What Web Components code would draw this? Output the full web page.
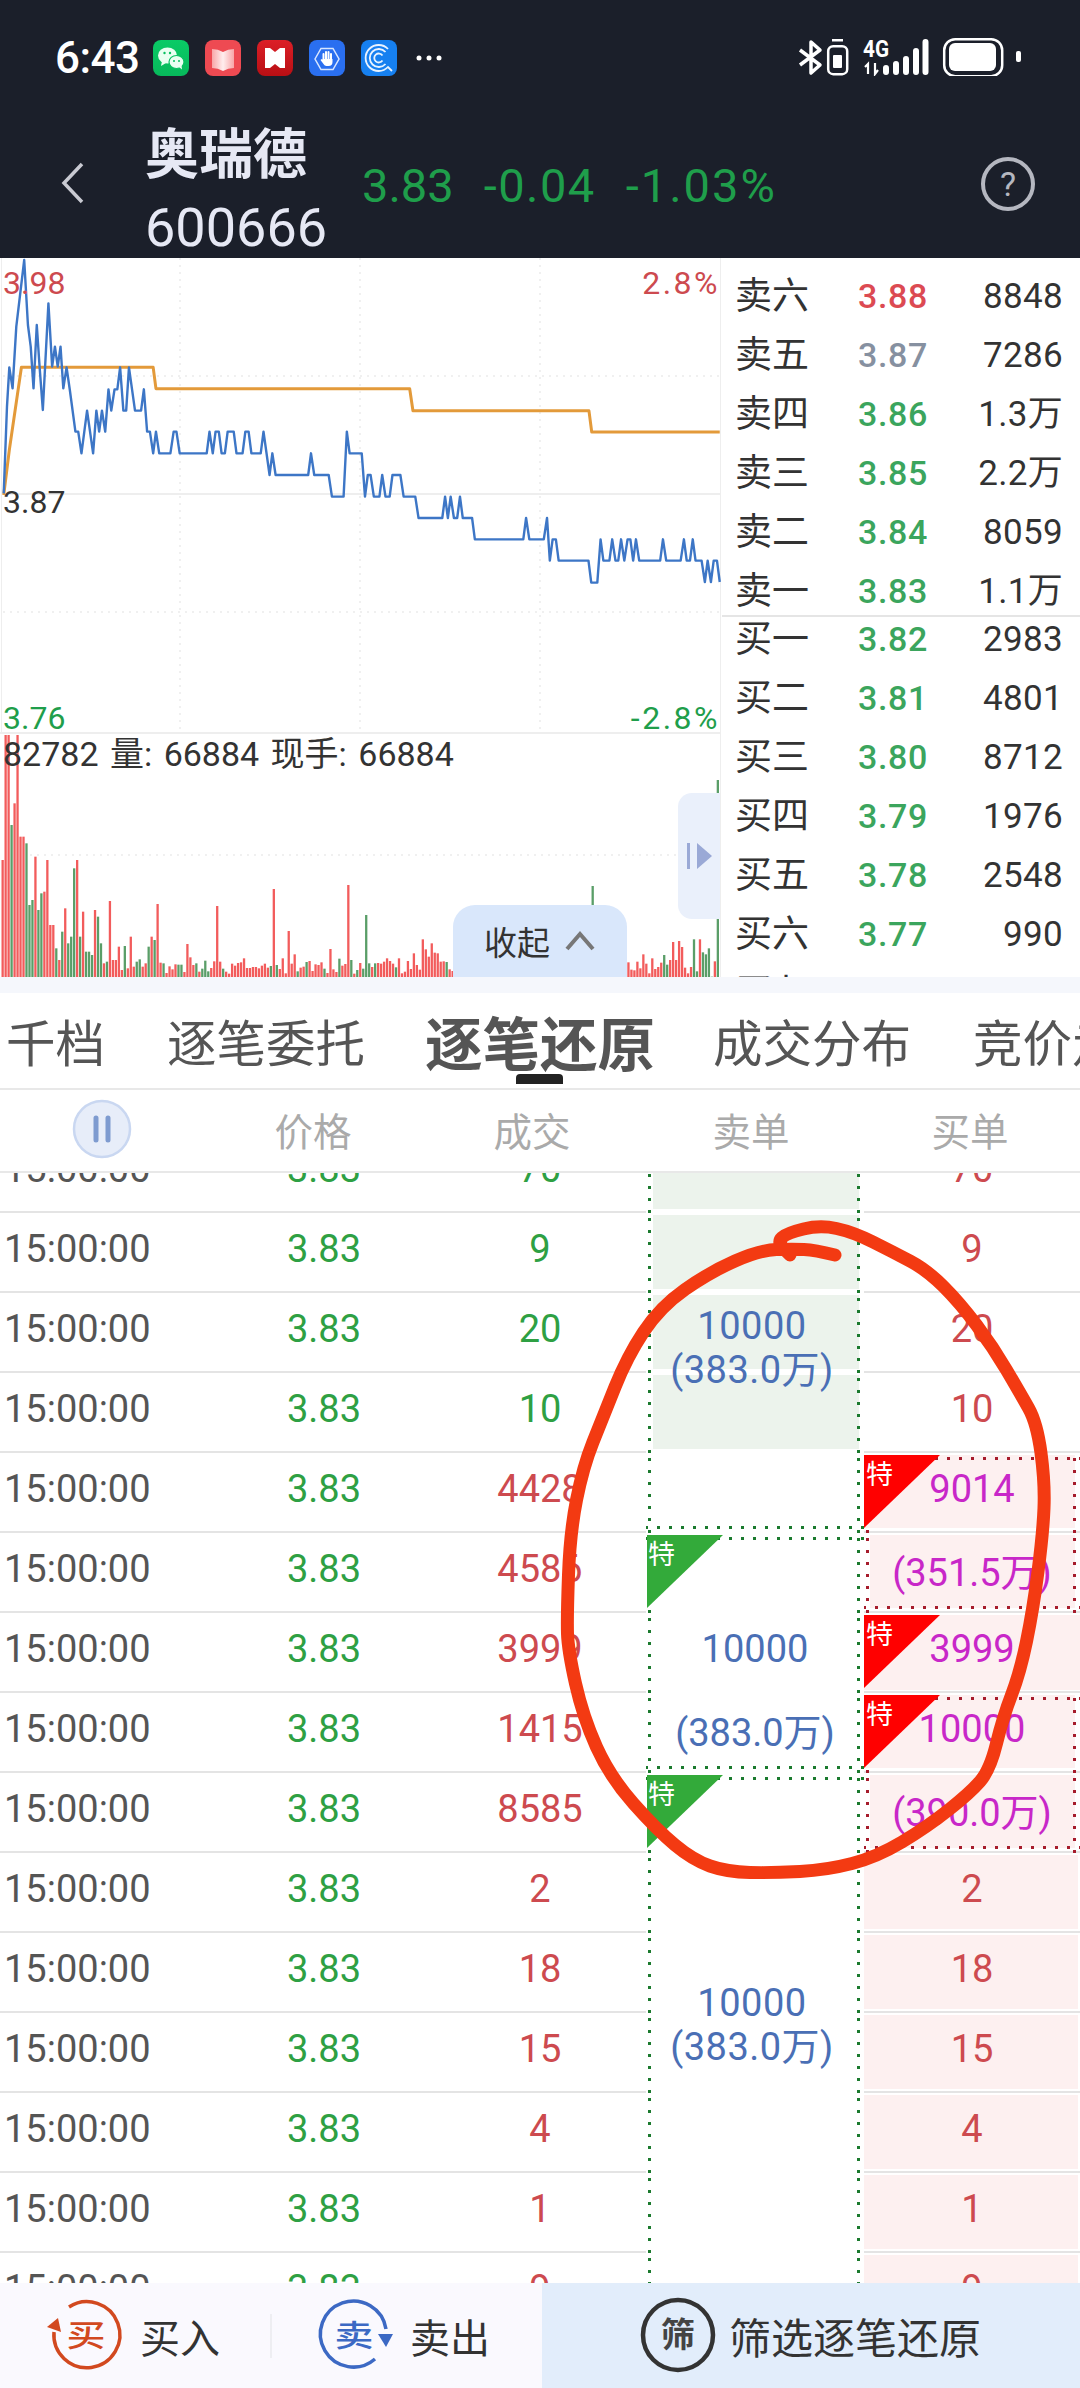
<!DOCTYPE html>
<html lang="zh">
<head>
<meta charset="utf-8">
<title>奥瑞德</title>
<style>
html,body{margin:0;padding:0;background:#fff;}
body{width:1080px;height:2388px;overflow:hidden;position:relative;display:flex;flex-direction:column;
	font-family:Roboto,"Noto Sans CJK SC",sans-serif;color:#333;}
</style>
</head>
<body>
<status-bar></status-bar>
<stock-header></stock-header>
<div style="display:flex;height:719px;flex:none">
	<minute-chart></minute-chart>
	<order-book></order-book>
</div>
<tab-bar></tab-bar>
<tick-head></tick-head>
<tick-table></tick-table>
<trade-bar></trade-bar>
<pen-mark></pen-mark>

<script>
'use strict';

const GREEN = '#2ea043';
const RED = '#cd4a4f';
const PURPLE = '#c827c8';

class StatusBar extends HTMLElement {
	constructor(){
		super();
		this.attachShadow({mode:'open'});
		this.shadowRoot.innerHTML = `
<style>
:host{display:flex;flex:none;height:76px;background:#1b1f2a;color:#fff;align-items:flex-start;padding:40px 0 0 55px;box-sizing:border-box;}
.time{font-size:44px;line-height:36px;font-weight:500;width:98px;flex:none;letter-spacing:-.5px;}
.apps{display:flex;gap:16px;flex:none;}
svg{display:block;flex:none;}
.more{margin:15px 0 0 19px;}
.sys{margin:-4px 55px 0 auto;}
</style>
<div class="time">6:43</div>
<div class="apps">
	<svg width="36" height="36" viewBox="0 0 36 36"><defs><linearGradient id="wx" x1="0" y1="0" x2="0" y2="1"><stop offset="0" stop-color="#0acb66"/><stop offset="1" stop-color="#07b95b"/></linearGradient></defs><rect width="36" height="36" rx="8" fill="url(#wx)"/><ellipse cx="14.500" cy="15.500" rx="9.500" ry="8" fill="#e9fff1"/><path d="M9 21l-1 5 5-3z" fill="#e9fff1"/><ellipse cx="23.500" cy="22" rx="7.500" ry="6.500" fill="#e9fff1" stroke="#08c060" stroke-width="1.200"/><path d="M26 27l3 2.500-.5-4z" fill="#e9fff1"/><circle cx="11.500" cy="13" r="1.200" fill="#08c060"/><circle cx="17" cy="13" r="1.200" fill="#08c060"/><circle cx="21" cy="21" r="1" fill="#08c060"/><circle cx="26" cy="21" r="1" fill="#08c060"/></svg>
	<svg width="36" height="36" viewBox="0 0 36 36"><defs><linearGradient id="bk" x1="0" y1="0" x2="1" y2="0"><stop offset="0" stop-color="#f8a6a8"/><stop offset=".5" stop-color="#ffeeee"/><stop offset="1" stop-color="#f8a6a8"/></linearGradient></defs><rect width="36" height="36" rx="8" fill="#ee4a52"/><path d="M7 9q6 0 11 3q5-3 11-3v19q-6 0-11 3q-5-3-11-3z" fill="url(#bk)"/></svg>
	<svg width="36" height="36" viewBox="0 0 36 36"><defs><linearGradient id="hd" x1="0" y1="0" x2="0" y2="1"><stop offset="0" stop-color="#dc1f27"/><stop offset="1" stop-color="#b80f14"/></linearGradient></defs><rect width="36" height="36" rx="8" fill="url(#hd)"/><path d="M8 8h5l5 4l5-4h5v20h-5l-5-4l-5 4h-5z" fill="#fff"/></svg>
	<svg width="36" height="36" viewBox="0 0 36 36"><rect width="36" height="36" rx="8" fill="#2a6ff0"/><path d="M6 19l6-10.500h12l6 10.500l-6 10.500h-12z" fill="none" stroke="#d8e6ff" stroke-width="1.500"/><path d="M14.500 20v-6m2.500 6v-8m2.500 8v-8m2.500 8v-6" stroke="#fff" stroke-width="2" stroke-linecap="round"/><path d="M13.500 19h10v3q0 4-4 4h-2q-2 0-3-2l-3-4l1-1l1 1z" fill="#fff"/></svg>
	<svg width="36" height="36" viewBox="0 0 36 36" fill="none" stroke="#e8f3ff"><rect width="36" height="36" rx="8" fill="#1680f0" stroke="none"/><path d="M27 9A13 13 0 1 0 27 27L31 31" stroke-width="1.800"/><path d="M24.500 12A9 9 0 1 0 24.500 24" stroke-width="1.800"/><path d="M21.500 15.500A4.500 4.500 0 1 0 21.500 20.500" stroke-width="1.800"/></svg>
</div>
<svg class="more" width="26" height="6" viewBox="0 0 26 6"><circle cx="3" cy="3" r="2.500" fill="#fff"/><circle cx="13" cy="3" r="2.500" fill="#fff"/><circle cx="23" cy="3" r="2.500" fill="#fff"/></svg>
<svg class="sys" width="230" height="44" viewBox="795 36 230 44" fill="none" stroke="#fff">
	<path d="M800 50l20 15l-9 8v-31l9 8l-20 15" stroke-width="3.500" stroke-linejoin="round"/>
	<rect x="832" y="39" width="11" height="2.500" fill="#fff" stroke="none"/>
	<rect x="828.200" y="46.200" width="19" height="28" rx="5" stroke-width="2.500"/>
	<rect x="833" y="55" width="9" height="13" rx="1" fill="#fff" stroke="none"/>
	<text x="863" y="57" font-family="Roboto" font-size="23" font-weight="700" fill="#fff" stroke="none" textLength="26" lengthAdjust="spacingAndGlyphs">4G</text>
	<path d="M868 74v-10l-3 3M875 63v11l3-4" stroke-width="2.200"/>
	<path d="M886 68v4M896 64v8M906 59v13M916 51v21M925.500 42v30" stroke-width="6" stroke-linecap="round"/>
	<rect x="944.200" y="39.200" width="58" height="37" rx="11" stroke-width="2.500"/>
	<rect x="949" y="43" width="47" height="28" rx="6" fill="#fff" stroke="none"/>
	<rect x="1016" y="51" width="5" height="11" rx="2" fill="#fff" stroke="none"/>
</svg>`;
	}
}
customElements.define('status-bar',StatusBar);

class StockHeader extends HTMLElement {
	constructor(){
		super();
		this.attachShadow({mode:'open'});
		this.shadowRoot.innerHTML = `
<style>
:host{display:flex;flex:none;height:182px;background:#1b1f2a;box-sizing:border-box;position:relative;overflow:hidden;}
.back{margin:86px 0 0 60px;flex:none;}
.name{margin-left:59px;padding-top:44px;width:216px;flex:none;color:#e6e8f4;}
.name div{line-height:72px;height:72px;white-space:nowrap;}
.cn{font-size:54px;font-weight:700;}
.code{font-size:54px;}
.quote{display:flex;gap:30px;margin:82px 0 0 1px;height:56px;line-height:56px;font-size:47px;color:#1f9e4b;white-space:nowrap;}
.quote span+span{letter-spacing:1.500px;}
.quote span:last-child{letter-spacing:2px;}
.help{margin:80px 44px 0 auto;flex:none;}
</style>
<svg class="back" width="26" height="42" viewBox="0 0 26 42"><path d="M22 2L4 21l18 19" fill="none" stroke="#c9cad2" stroke-width="3.500"/></svg>
<div class="name"><div class="cn">奥瑞德</div><div class="code">600666</div></div>
<div class="quote"><span>3.83</span><span>-0.04</span><span>-1.03%</span></div>
<svg class="help" width="56" height="56" viewBox="0 0 56 56"><circle cx="28" cy="28" r="25" fill="none" stroke="#b5b7c0" stroke-width="4"/><text x="28" y="40" text-anchor="middle" font-size="34" fill="#b5b7c0" font-family="Roboto">?</text></svg>`;
	}
}
customElements.define('stock-header',StockHeader);

class MinuteChart extends HTMLElement {
	constructor(){
		super();
		this.attachShadow({mode:'open'});
		this.shadowRoot.innerHTML = `
<style>
:host{display:block;position:relative;flex:none;width:722px;height:719px;overflow:hidden;background:#fff;border-right:0;}
svg{display:block;}
span{position:absolute;font-size:32px;line-height:36px;white-space:nowrap;}
.r{color:${RED}}.g{color:#1f9e4b}.k{color:#333}
.wide{letter-spacing:2.500px;}
.vol{left:3px;top:478px;font-size:34px;color:#333;word-spacing:3px;}
.fold{position:absolute;left:453px;top:647px;width:174px;height:72px;background:#d9e7fb;border-radius:22px 22px 0 0;display:flex;align-items:center;justify-content:center;gap:14px;font-size:33px;color:#333;}
.side{position:absolute;left:678px;top:535px;width:42px;height:126px;background:#eaf0fb;border-radius:14px 0 0 14px;display:flex;align-items:center;justify-content:center;}
</style>
<svg width="722" height="719" viewBox="0 258 722 719" id="plot"></svg>
<span class="r" style="left:3px;top:7px">3.98</span>
<span class="r wide" style="right:2px;top:7px">2.8%</span>
<span class="k" style="left:3px;top:226px">3.87</span>
<span class="g" style="left:3px;top:442px">3.76</span>
<span class="g wide" style="right:2px;top:442px">-2.8%</span>
<span class="vol">82782 量: 66884 现手: 66884</span>
<div class="side"><svg width="26" height="28" viewBox="0 0 26 28"><rect x="1" y="1" width="3" height="26" fill="#9aa9d6"/><path d="M11 1l15 13l-15 13z" fill="#9aa9d6"/></svg></div>
<div class="fold"><b style="font-weight:400">收起</b><svg width="32" height="22" viewBox="0 0 32 22"><path d="M3 19L16 4l13 15" fill="none" stroke="#777" stroke-width="4"/></svg></div>`;
		this.Draw();
	}

	get Line(){
		return '8,730 15,470 20,352 27,415 35,230 52,30 60,225 66,290 72,415 79,225 85,350 92,480 104,160 112,350 118,290 124,350 130,290 136,415 143,352 150,420 162,545 168,545 175,610 187,482 200,610 207,482 213,545 219,482 226,545 233,418 239,482 246,418 252,418 258,352 265,482 271,482 277,352 290,482 303,482 309,418 316,545 322,545 329,610 335,545 342,610 366,610 373,545 379,545 386,610 444,610 450,545 457,610 463,545 470,545 476,610 483,610 489,545 502,545 508,610 521,610 527,545 534,545 540,610 560,610 566,545 579,675 585,610 592,675 662,675 668,610 675,675 706,675 713,740 738,740 745,545 751,610 777,610 784,740 790,675 796,675 803,740 815,740 821,675 828,740 837,740 843,675 860,675 867,740 892,740 899,804 950,804 956,740 962,804 968,740 975,804 982,804 988,740 994,804 1014,804 1020,868 1124,868 1130,804 1137,868 1168,868 1175,804 1181,932 1187,868 1194,868 1200,932 1264,932 1270,998 1283,998 1290,868 1296,932 1309,932 1315,868 1322,932 1328,932 1334,868 1341,932 1348,868 1354,868 1360,932 1366,868 1373,932 1418,932 1424,868 1431,932 1462,932 1469,868 1475,932 1482,932 1488,868 1494,932 1507,932 1514,996 1520,932 1527,996 1533,932 1540,932 1546,996';
	}

	// tops are read off the crop of the reference: 3x vertical, from y=720
	get Bars(){
		let head = 'r420 r40 r40 g315 r250 r40 r350 r350 g370 g555 g540 r410 g570 g520 r515 r420 r615 r615 g685 r720 g635 r565 g670 g650 g445 r420 g650 r575 g695 g695 g705 r570 g590 g670 r730 g725 r543 r720 r720 r680 r750 g678 r745 r650 r740 g725 g718 r740 r730 g680 r650 g660 r552'.split(' ');
		let over = {62:'r672',63:'r712',72:'r558',81:'r715',91:'r507',92:'g735',94:'r715',96:'r633',98:'r703',110:'r687',113:'g716',116:'r495',117:'g720',122:'g585',129:'r715',133:'r715',138:'r700',141:'r658',142:'r688',143:'r710',144:'r670',145:'r698',146:'r700',147:'r725',198:'g498',210:'r727',215:'r703',218:'r715',222:'g705',224:'r720',225:'r666',226:'r720',227:'r663',228:'r681',232:'g658',234:'r658',235:'g697',236:'g703',237:'g685',238:'g770',240:'g180'};
		let seed = 17;
		let out = [];
		for(let i=0; i<241; i++){
			seed = (seed*137+59)%1009;
			let v = head[i] || over[i];
			if(!v){
				v = (seed%4==0 ? 'g' : 'r') + (722+seed%40);
			}
			out.push(v);
		}
		return out;
	}

	Draw(){
		let bars = this.Bars.map((b,i)=>{
			let top = Math.max(720+Number(b.slice(1))/3,735);
			let col = b[0]=='r' ? '#f25c5c' : '#5a9e68';
			return `<rect x="${1.5+i*2.98}" y="${top}" width="2.300" height="${977-top}" fill="${col}"/>`;
		}).join('');
		let dots = 'stroke="#ececec" stroke-width="1.500" stroke-dasharray="2 5"';
		this.shadowRoot.querySelector('#plot').innerHTML = `
<path d="M3 376H720M3 612H720M180 258V732M360 258V732M540 258V732" fill="none" ${dots}/>
<path d="M30 855H680" fill="none" ${dots}/>
<path d="M3 494H720M0 733H720" fill="none" stroke="#eeeeee" stroke-width="2"/>
<path d="M720.500 258V977M1.500 258V732" fill="none" stroke="#eeeeee" stroke-width="1"/>
<g transform="translate(0 250) scale(.46556 .33333)" fill="none" stroke-linejoin="round">
	<polyline points="8,735 20,600 46,352 329,352 335,416 880,416 887,482 1265,482 1271,546 1546,546" stroke="#e39a3a" stroke-width="3" vector-effect="non-scaling-stroke"/>
	<polyline points="${this.Line}" stroke="#3d76c6" stroke-width="2.400" vector-effect="non-scaling-stroke"/>
</g>
${bars}`;
	}
}
customElements.define('minute-chart',MinuteChart);

class OrderBook extends HTMLElement {
	constructor(){
		super();
		this.attachShadow({mode:'open'});
		let row = (a)=>`<div class="row"><span>${a[0]}</span><span style="color:${a[3]||'#3ba55d'}">${a[1]}</span><span class="v">${a[2]}</span></div>`;
		let sell = [['卖六','3.88','8848','#dc4a52'],['卖五','3.87','7286','#8690a0'],['卖四','3.86','1.3万'],['卖三','3.85','2.2万'],['卖二','3.84','8059'],['卖一','3.83','1.1万']];
		let buy = [['买一','3.82','2983'],['买二','3.81','4801'],['买三','3.80','8712'],['买四','3.79','1976'],['买五','3.78','2548'],['买六','3.77','990'],['买七','3.76','1204']];
		this.shadowRoot.innerHTML = `
<style>
:host{display:block;flex:none;width:358px;height:719px;overflow:hidden;background:#fff;}
.sell{height:359px;padding-top:9px;box-sizing:border-box;border-bottom:2px solid #e5e5e5;}
.buy{margin-top:-7px;}
.row{display:grid;grid-template-columns:123px 1fr auto;height:59px;line-height:59px;padding:0 17px 0 13px;font-size:35px;color:#333;letter-spacing:.3px;}
.row span:first-child{font-size:37px;letter-spacing:0;}
.row span:nth-child(2){font-weight:500;font-size:34px;letter-spacing:.6px;}
</style>
<div class="sell">${sell.map(row).join('')}</div>
<div class="buy">${buy.map(row).join('')}</div>`;
	}
}
customElements.define('order-book',OrderBook);

class TabBar extends HTMLElement {
	constructor(){
		super();
		this.attachShadow({mode:'open'});
		this.shadowRoot.innerHTML = `
<style>
:host{display:block;flex:none;box-sizing:border-box;height:113px;padding-top:16px;background:linear-gradient(#f5f7fc 16px,#fff 16px);border-bottom:2px solid #e8e8e8;overflow:hidden;}
ul{list-style:none;margin:0;padding:0 0 0 6px;display:flex;gap:62px;height:95px;align-items:center;white-space:nowrap;font-size:49.500px;color:#555;}
li{flex:none;position:relative;}
.on{font-size:57.500px;font-weight:700;margin:0 -4px 0 -2px;}
.on::after{content:'';position:absolute;left:91px;top:75px;width:47px;height:10px;background:#222;border-radius:4px 4px 0 0;}
</style>
<ul><li>千档</li><li>逐笔委托</li><li class="on">逐笔还原</li><li>成交分布</li><li>竞价走势</li></ul>`;
	}
}
customElements.define('tab-bar',TabBar);

class TickHead extends HTMLElement {
	constructor(){
		super();
		this.attachShadow({mode:'open'});
		this.shadowRoot.innerHTML = `
<style>
:host{display:grid;flex:none;grid-template-columns:204px 218px 220px 218px 220px;height:83px;box-sizing:border-box;border-bottom:2px solid #e8e8e8;background:#fff;align-items:center;justify-items:center;color:#aaa;font-size:38.500px;padding-bottom:4px;}
svg{display:block;}
</style>
<svg width="60" height="60" viewBox="0 0 60 60"><circle cx="30" cy="30" r="28" fill="#e7edf9" stroke="#c9d7f1" stroke-width="2.500"/><path d="M24 19v22M36 19v22" stroke="#7e9bd0" stroke-width="5" stroke-linecap="round"/></svg>
<span>价格</span><span>成交</span><span>卖单</span><span>买单</span>`;
	}
}
customElements.define('tick-head',TickHead);

class TickRow extends HTMLElement {
	constructor(){
		super();
		this.attachShadow({mode:'open'});
	}

	// the flags say which dotted edges a sell or buy cell has
	static Layers(flags,dot,x1,x2){
		let on = (f)=>flags.includes(f);
		let out = [];
		if(on('side')){
			out.push(`linear-gradient(${dot} 3px,transparent 3px) ${x1}px 5px / 3px 12px repeat-y`);
			out.push(`linear-gradient(${dot} 3px,transparent 3px) ${x2}px 5px / 3px 12px repeat-y`);
		}
		if(on('top')) out.push(`linear-gradient(90deg,${dot} 3px,transparent 3px) 11px 4px / 12px 3px repeat-x`);
		if(on('bot')) out.push(`linear-gradient(90deg,${dot} 3px,transparent 3px) 11px 73px / 12px 3px repeat-x`);
		return out;
	}

	connectedCallback(){
		let a = (n)=>this.getAttribute(n) || '';
		let sellFlags = a('sell-flags').split(' ');
		let buyFlags = a('buy-flags').split(' ');

		let sellBg = TickRow.Layers(sellFlags,'#1b7a2e',2,211);
		if(sellFlags.includes('fill')) sellBg.push('linear-gradient(#ecf3ec,#ecf3ec) 7px 2px / 206px 74px no-repeat');
		sellBg.push('#fff');

		let buyBg = TickRow.Layers(buyFlags,'#a61c2c',2,209);
		if(buyFlags.includes('pink')) buyBg.push('linear-gradient(#fdf0f0,#fdf0f0) 0 2px / 214px 74px no-repeat');
		if(buyFlags.includes('pinkw')) buyBg.push('linear-gradient(#fdf0f0,#fdf0f0) 0 2px / 216px 75px no-repeat');
		if(buyFlags.includes('pinkd')) buyBg.push('linear-gradient(#fdf0f0,#fdf0f0) 0 2px / 211px 73px no-repeat');
		if(buyFlags.includes('pinki')) buyBg.push('linear-gradient(#fdf0f0,#fdf0f0) 6px 2px / 205px 73px no-repeat');

		let note = a('note') ? `<div class="note" style="top:${a('note-top')}px">${a('note').split('|').map(t=>`<div>${t}</div>`).join('')}</div>` : '';
		let sellTri = sellFlags.includes('tri') ? '<div class="tri g"></div><i class="te">特</i>' : '';
		let buyTri = buyFlags.includes('tri') ? '<div class="tri r"></div><i class="te">特</i>' : '';

		this.shadowRoot.innerHTML = `
<style>
:host{display:grid;grid-template-columns:214px 220px 212px 218px 216px;height:80px;box-sizing:border-box;border-bottom:2px solid #e4e4e4;font-size:38px;}
.c{display:flex;align-items:center;justify-content:center;padding-bottom:6px;box-sizing:border-box;white-space:nowrap;}
.time{justify-content:flex-start;padding-left:4px;color:#555;}
.price{color:${GREEN};}
.sell,.buy{position:relative;height:80px;margin-bottom:-2px;padding-bottom:8px;}
.sell{color:#4a6fb5;background:${sellBg.join(',')};}
.buy{color:${a('buy-color')||RED};background:${buyBg.join(',')};}
.tri{position:absolute;top:2px;left:0;width:76px;height:73px;clip-path:polygon(0 0,100% 0,0 100%);}
.tri.r{background:#ff0000;}
.tri.g{background:#33aa3a;left:1px;}
.te{position:absolute;left:2px;top:3px;font-style:normal;font-size:27px;line-height:38px;color:#fff;}
.note{position:absolute;left:0;right:6px;text-align:center;line-height:44px;z-index:1;color:#4a6fb5;letter-spacing:.5px;}
</style>
<div class="c time">${a('time')}</div>
<div class="c price">${a('price')}</div>
<div class="c vol" style="color:${a('vol-color')}">${a('vol')}</div>
<div class="c sell">${sellTri}${a('sell')}${note}</div>
<div class="c buy">${buyTri}<span style="position:relative">${a('buy')}</span></div>`;
	}
}
customElements.define('tick-row',TickRow);

class TickTable extends HTMLElement {
	constructor(){
		super();
		this.attachShadow({mode:'open'});
		this.shadowRoot.innerHTML = `
<style>
:host{display:block;flex:1;min-height:0;overflow:hidden;background:#fff;}
.inner{margin-top:-40px;}
</style>
<div class="inner"><slot></slot></div>`;
		let rows = [
			{vol:70,c:GREEN,buy:70,sf:'side fill'},
			{vol:9,c:GREEN,buy:9,sf:'side fill'},
			{vol:20,c:GREEN,buy:20,sf:'side fill',note:'10000|(383.0万)',top:11},
			{vol:10,c:GREEN,buy:10,sf:'side fill'},
			{vol:4428,c:RED,buy:9014,bc:PURPLE,sf:'side bot',bf:'pinkd top side tri'},
			{vol:4586,c:RED,buy:'(351.5万)',bc:PURPLE,sf:'side top tri',bf:'pinki side bot'},
			{vol:3999,c:RED,buy:3999,bc:PURPLE,sf:'side',sell:'10000',bf:'pinkw tri'},
			{vol:1415,c:RED,buy:10000,bc:PURPLE,sf:'side bot',sell:'(383.0万)',bf:'pinkd top side tri'},
			{vol:8585,c:RED,buy:'(390.0万)',bc:PURPLE,sf:'side top tri',bf:'pinki side bot'},
			{vol:2,c:RED,buy:2,sf:'side',bf:'pink'},
			{vol:18,c:RED,buy:18,sf:'side',bf:'pink',note:'10000|(383.0万)',top:48},
			{vol:15,c:RED,buy:15,sf:'side',bf:'pink'},
			{vol:4,c:RED,buy:4,sf:'side',bf:'pink'},
			{vol:1,c:RED,buy:1,sf:'side',bf:'pink'},
			{vol:9,c:RED,buy:9,sf:'side',bf:'pink'},
		];
		for(let r of rows){
			let el = document.createElement('tick-row');
			el.setAttribute('time','15:00:00');
			el.setAttribute('price','3.83');
			el.setAttribute('vol',r.vol);
			el.setAttribute('vol-color',r.c);
			el.setAttribute('buy',r.buy);
			el.setAttribute('buy-color',r.bc || RED);
			el.setAttribute('sell-flags',r.sf);
			el.setAttribute('buy-flags',r.bf || '');
			if(r.sell) el.setAttribute('sell',r.sell);
			if(r.note){
				el.setAttribute('note',r.note);
				el.setAttribute('note-top',r.top);
			}
			this.append(el);
		}
	}
}
customElements.define('tick-table',TickTable);

class TradeBar extends HTMLElement {
	constructor(){
		super();
		this.attachShadow({mode:'open'});
		this.shadowRoot.innerHTML = `
<style>
:host{display:flex;flex:none;height:105px;background:#faf9fe;color:#333;font-size:40px;}
.act{display:flex;align-items:center;flex:none;}
.buy{width:270px;padding-left:50px;box-sizing:border-box;gap:18px;}
.sep{width:2px;height:44px;background:#eeeef2;align-self:center;flex:none;}
.sell{width:270px;padding-left:46px;box-sizing:border-box;gap:20px;}
.filter{flex:1;background:#e2edfb;padding-left:98px;gap:13px;font-size:42px;}
svg{display:block;flex:none;overflow:visible;margin-bottom:1px;}
</style>
<div class="act buy">
	<svg width="72" height="72" viewBox="0 0 72 72"><path d="M19 8A33 33 0 1 1 4 33" fill="none" stroke="#d2491f" stroke-width="3.500"/><path d="M8 19L-3 28L11 33z" fill="#d2491f"/><text x="0" y="47" transform="translate(36 0) scale(1.300 1)" text-anchor="middle" font-size="30" fill="#d2491f" font-weight="500">买</text></svg>
	<span>买入</span>
</div>
<div class="sep"></div>
<div class="act sell">
	<svg width="72" height="72" viewBox="0 0 72 72"><path d="M57 60A33 33 0 1 1 68 30" fill="none" stroke="#3c69c4" stroke-width="3.500"/><path d="M60 35H75L68 48z" fill="#3c69c4"/><text x="0" y="47" transform="translate(36 0) scale(1.300 1)" text-anchor="middle" font-size="30" fill="#3c69c4" font-weight="500">卖</text></svg>
	<span>卖出</span>
</div>
<div class="act filter">
	<svg width="76" height="76" viewBox="0 0 76 76"><circle cx="38" cy="38" r="35" fill="none" stroke="#333" stroke-width="4.500"/><text x="38" y="50" text-anchor="middle" font-size="34" font-weight="700" fill="#444">筛</text></svg>
	<span>筛选逐笔还原</span>
</div>`;
	}
}
customElements.define('trade-bar',TradeBar);

// the red hand drawn ring lying over the table, page coordinates
class PenMark extends HTMLElement {
	constructor(){
		super();
		this.attachShadow({mode:'open'});
		let pts = [[835,1255],[815,1250],[793,1249],[760,1250],[710,1272],[660,1307],[627,1357],[603,1417],[583,1467],[570,1533],[567,1617],[568,1650],[583,1717],[610,1777],[657,1830],[693,1860],[727,1872],[773,1873],[827,1870],[877,1857],[927,1827],[970,1793],[990,1770],[1003,1717],[1020,1673],[1033,1610],[1043,1533],[1045,1483],[1037,1423],[1020,1393],[993,1347],[960,1303],[927,1270],[893,1252],[853,1232],[820,1225],[787,1233],[777,1242],[790,1255]];
		let d = `M${pts[0]}`;
		for(let i=1; i<pts.length-1; i++){
			let mx = (pts[i][0]+pts[i+1][0])/2;
			let my = (pts[i][1]+pts[i+1][1])/2;
			d += `Q${pts[i]} ${mx},${my}`;
		}
		d += `L${pts[pts.length-1]}`;
		this.shadowRoot.innerHTML = `
<style>
:host{position:absolute;left:0;top:0;width:1080px;height:2388px;pointer-events:none;}
svg{display:block;}
</style>
<svg width="1080" height="2388" viewBox="0 0 1080 2388"><path d="${d}" fill="none" stroke="#f33a12" stroke-width="13" stroke-linecap="round" stroke-linejoin="round"/></svg>`;
	}
}
customElements.define('pen-mark',PenMark);
</script>
</body>
</html>
